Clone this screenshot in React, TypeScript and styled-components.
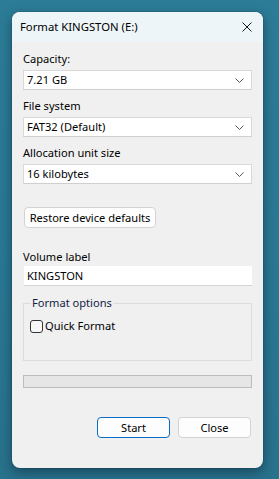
import React from "react";
import styled, { createGlobalStyle } from "styled-components";

const Global = createGlobalStyle`
  html, body { margin: 0; padding: 0; }
  body {
    width: 279px;
    height: 479px;
    overflow: hidden;
    background: linear-gradient(180deg, #2c7c97 0%, #2a7792 60%, #28728c 100%);
    font-family: "Noto Sans", "Open Sans", sans-serif;
    font-size: 11.1px;
    color: #000;
  }
`;

const Page = styled.div`
  padding: 12px 16px 11px 12px;
`;

const Window = styled.div`
  width: 251px;
  height: 456px;
  border-radius: 8px;
  overflow: hidden;
  display: flex;
  flex-direction: column;
  background: #f0f0f0;
  box-shadow: 0 4px 12px rgba(0, 20, 30, 0.45), 0 0 0 1px rgba(0, 0, 0, 0.08);
`;

const TitleBar = styled.div`
  height: 30px;
  flex: none;
  display: flex;
  align-items: center;
  justify-content: space-between;
  padding: 0 10px 0 8px;
  background: #eef5f8;
`;

const Title = styled.span`
  font-size: 11.3px;
  line-height: 16px;
  color: #000;
  white-space: nowrap;
`;

const CloseX = styled.svg`
  width: 10px;
  height: 10px;
  margin-right: 1px;
`;

const Body = styled.div`
  flex: 1;
  display: flex;
  flex-direction: column;
  padding: 9px 11px 0 11px;
`;

const Label = styled.div<{ $top?: number; $bottom?: number }>`
  line-height: 16px;
  white-space: nowrap;
  margin-top: ${(p) => p.$top ?? 8}px;
  margin-bottom: ${(p) => p.$bottom ?? 3}px;
`;

const Combo = styled.div`
  height: 20px;
  box-sizing: border-box;
  background: #fff;
  border: 1px solid #d9d9d9;
  border-bottom-color: #cfcfcf;
  display: flex;
  align-items: center;
  justify-content: space-between;
  padding: 0 7px 0 3px;
  line-height: 16px;
  white-space: nowrap;
`;

const Chevron = styled.svg`
  width: 9px;
  height: 5px;
`;

const PushButton = styled.div<{ $primary?: boolean; $width?: number }>`
  box-sizing: border-box;
  height: 21px;
  width: ${(p) => (p.$width ? `${p.$width}px` : "auto")};
  display: inline-flex;
  align-items: center;
  justify-content: center;
  background: #fdfdfd;
  border: 1px solid ${(p) => (p.$primary ? "#0a6cc2" : "#d3d3d3")};
  border-radius: 4px;
  line-height: 16px;
  white-space: nowrap;
`;

const RestoreRow = styled.div`
  display: flex;
  margin-top: 23px;
  padding-left: 1px;
`;

const RestoreButton = styled(PushButton)`
  width: 132px;
`;

const TextInput = styled.div`
  height: 20px;
  box-sizing: border-box;
  background: #fff;
  border-bottom: 1px solid #d4d4d4;
  display: flex;
  align-items: center;
  padding-left: 3px;
  margin-left: 1px;
  line-height: 16px;
`;

const Group = styled.fieldset`
  margin: 9px 0 0 0;
  padding: 0 6px;
  height: 66px;
  box-sizing: border-box;
  border: 1px solid #dcdcdc;
  border-radius: 0;
  min-width: 0;
`;

const Legend = styled.legend`
  padding: 0 1px;
  margin-left: 1px;
  color: #141c44;
  line-height: 16px;
`;

const CheckRow = styled.label`
  display: flex;
  align-items: center;
  gap: 2px;
  margin-top: 7px;
  line-height: 16px;
`;

const CheckBox = styled.span`
  width: 13px;
  height: 13px;
  box-sizing: border-box;
  border: 1px solid #333;
  border-radius: 3px;
  background: #f7f7f7;
`;

const Progress = styled.div`
  margin-top: 14px;
  height: 13px;
  box-sizing: border-box;
  background: #e6e6e6;
  border: 1px solid #bcbcbc;
`;

const Footer = styled.div`
  display: flex;
  justify-content: flex-end;
  gap: 8px;
  margin-top: 29px;
  padding-right: 1px;
`;

const combo = (text: string) => (
  <Combo>
    <span>{text}</span>
    <Chevron viewBox="0 0 9 5">
      <path d="M0.5 0.5 L4.5 4.5 L8.5 0.5" fill="none" stroke="#555" strokeWidth="1" />
    </Chevron>
  </Combo>
);

export default function App() {
  return (
    <>
      <Global />
      <Page>
        <Window>
          <TitleBar>
            <Title>Format KINGSTON (E:)</Title>
            <CloseX viewBox="0 0 10 10">
              <path d="M0.5 0.5 L9.5 9.5 M9.5 0.5 L0.5 9.5" stroke="#1a1a1a" strokeWidth="1" fill="none" />
            </CloseX>
          </TitleBar>
          <Body>
            <Label $top={0}>Capacity:</Label>
            {combo("7.21 GB")}
            <Label>File system</Label>
            {combo("FAT32 (Default)")}
            <Label>Allocation unit size</Label>
            {combo("16 kilobytes")}
            <RestoreRow>
              <RestoreButton>Restore device defaults</RestoreButton>
            </RestoreRow>
            <Label $top={21} $bottom={1}>Volume label</Label>
            <TextInput>KINGSTON</TextInput>
            <Group>
              <Legend>Format options</Legend>
              <CheckRow>
                <CheckBox />
                <span>Quick Format</span>
              </CheckRow>
            </Group>
            <Progress />
            <Footer>
              <PushButton $primary $width={73}>Start</PushButton>
              <PushButton $width={73}>Close</PushButton>
            </Footer>
          </Body>
        </Window>
      </Page>
    </>
  );
}
